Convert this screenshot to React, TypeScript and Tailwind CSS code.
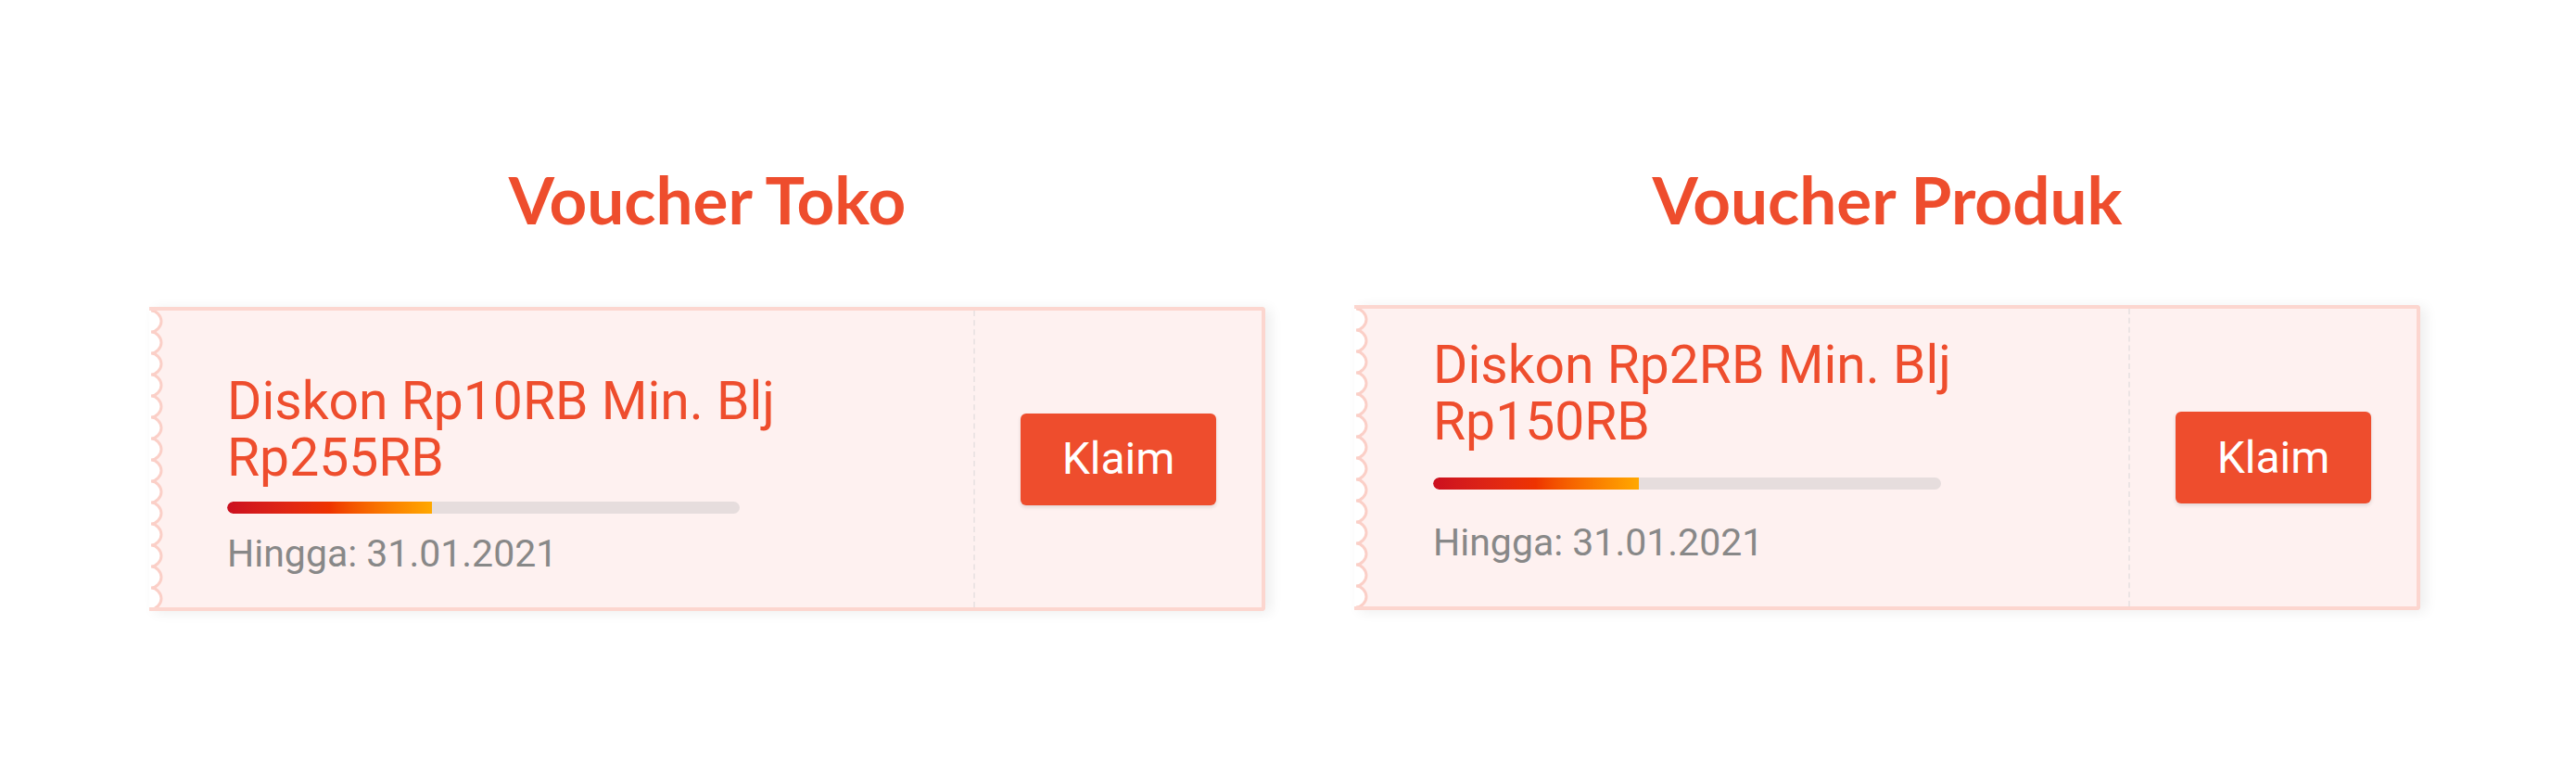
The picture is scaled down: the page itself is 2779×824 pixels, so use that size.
import { useId } from "react";

type Voucher = {
  title: string;
  amount: string;
  minSpend: string;
  until: string;
  progress: number;
  width: string;
  cardTop: string;
  cardHeight: string;
  textPad: string;
  barTop: string;
  dateTop: string;
  barWidth: string;
};

const vouchers: Voucher[] = [
  {
    title: "Voucher Toko",
    amount: "Rp10RB",
    minSpend: "Rp255RB",
    until: "31.01.2021",
    progress: 40,
    width: "w-[1204px]",
    cardTop: "mt-[80px]",
    cardHeight: "h-[328px]",
    textPad: "pt-[67px] pl-[68px]",
    barTop: "mt-[17px]",
    dateTop: "mt-[19px]",
    barWidth: "w-[553px]",
  },
  {
    title: "Voucher Produk",
    amount: "Rp2RB",
    minSpend: "Rp150RB",
    until: "31.01.2021",
    progress: 40.5,
    width: "w-[1150px]",
    cardTop: "mt-[78px]",
    cardHeight: "h-[329px]",
    textPad: "pt-[30px] pl-[69px]",
    barTop: "mt-[30px]",
    dateTop: "mt-[33px]",
    barWidth: "w-[548px]",
  },
];

// scalloped ticket edge on the left side of the card
const WavyEdge = () => {
  const id = useId().replace(/:/g, "");
  return (
    <div className="w-[16px] shrink-0 self-stretch">
      <svg width="16" height="100%" className="block h-full">
        <defs>
          <pattern id={`wave-${id}`} width="16" height="23" patternUnits="userSpaceOnUse">
            <path d="M0 0 H2 C8 0 13 6 13 11.5 C13 17 8 23 2 23 H0 Z" fill="#ffffff" />
            <path
              d="M2 0 C8 0 13 6 13 11.5 C13 17 8 23 2 23"
              fill="none"
              stroke="#fbcfc7"
              strokeWidth="3"
            />
          </pattern>
        </defs>
        <rect width="16" height="100%" fill={`url(#wave-${id})`} />
      </svg>
    </div>
  );
};

const VoucherCard = ({ v }: { v: Voucher }) => {
  return (
    <div className={`flex flex-col items-center ${v.width}`}>
      <h2 className="font-[Lato,sans-serif] font-bold text-[71px] leading-[72px] text-[#ee4d2d]">
        {v.title}
      </h2>
      <div
        className={`${v.cardTop} ${v.cardHeight} w-full flex bg-[#fef1f0] border-y-4 border-r-4 border-[#fcd6cf] rounded-r-[4px] shadow-[6px_2px_14px_rgba(0,0,0,0.07)]`}
      >
        <WavyEdge />
        <div className={`flex-1 flex flex-col ${v.textPad} font-[Roboto,sans-serif]`}>
          <p className="max-w-[640px] text-[57px] leading-[61px] text-[#ee4d2d]">
            Diskon {v.amount} Min. Blj {v.minSpend}
          </p>
          <div className={`${v.barTop} ${v.barWidth} h-[13px] rounded-full bg-[#e6dddd] overflow-hidden`}>
            <div
              className="h-full rounded-l-full bg-linear-to-r from-[#cc0f1f] via-[#ee3300] to-[#ffa800]"
              style={{ width: `${v.progress}%` }}
            />
          </div>
          <p className={`${v.dateTop} text-[41px] leading-[48px] text-[#888888]`}>Hingga: {v.until}</p>
        </div>
        <div className="w-[2px] border-l-2 border-dashed border-[#ece4e4]" />
        <div className="w-[309px] flex items-center justify-center">
          <button className="w-[211px] h-[99px] rounded-[6px] bg-[#ee4d2d] text-white font-[Roboto,sans-serif] text-[48px] shadow-[0_2px_4px_rgba(0,0,0,0.12)]">
            Klaim
          </button>
        </div>
      </div>
    </div>
  );
};

export default function App() {
  return (
    <div className="w-full h-[824px] bg-white flex gap-[96px] pl-[161px] pt-[179px]">
      {vouchers.map((v) => (
        <VoucherCard key={v.title} v={v} />
      ))}
    </div>
  );
}
